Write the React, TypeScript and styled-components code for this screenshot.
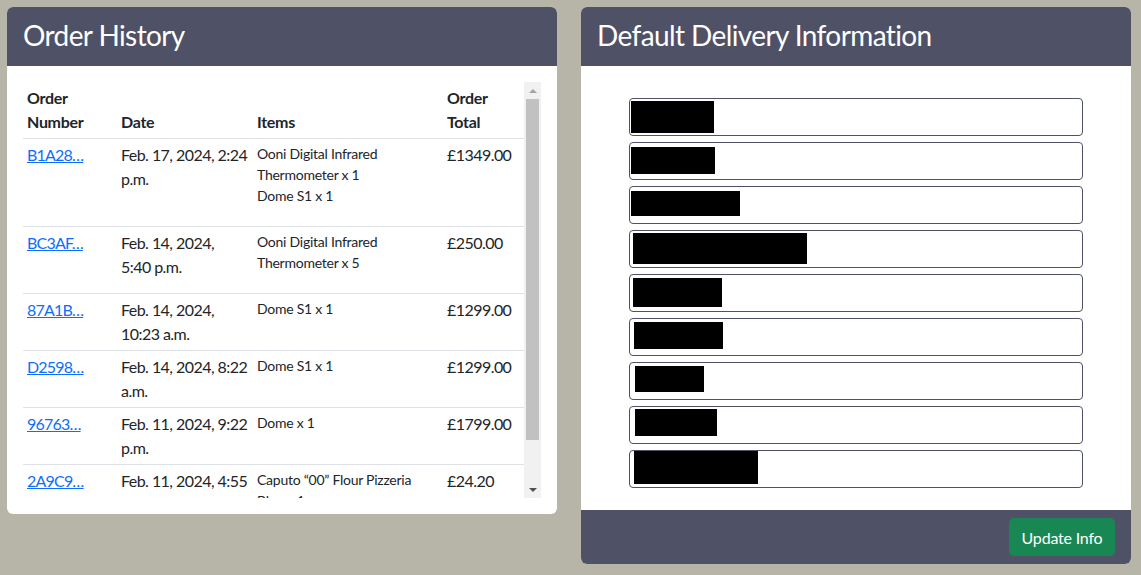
import React from "react";
import styled, { createGlobalStyle } from "styled-components";

const GlobalStyle = createGlobalStyle`
  html, body { margin: 0; padding: 0; }
  body {
    background: #b7b5a7;
    font-family: Lato, "Open Sans", sans-serif;
    color: #212529;
  }
  * { box-sizing: border-box; }
`;

const Page = styled.div`
  display: grid;
  grid-template-columns: 550px 550px;
  column-gap: 24px;
  align-items: start;
  padding: 7px;
  min-height: 575px;
`;

const Card = styled.section`
  background: #fff;
  border-radius: 6px;
  overflow: hidden;
  display: flex;
  flex-direction: column;
`;

const CardHeader = styled.header`
  background: #4f5166;
  height: 59px;
  padding: 0 16px;
  display: flex;
  align-items: center;
`;

const Title = styled.h2`
  margin: 0;
  color: #fff;
  font-size: 28px;
  font-weight: 400;
  line-height: 1.2;
  letter-spacing: -0.6px;
  padding-bottom: 2px;
`;

const CardBody = styled.div<{ $pad: string }>`
  padding: ${(p) => p.$pad};
`;

const ScrollArea = styled.div`
  display: flex;
  height: 416px;
`;

const Viewport = styled.div`
  flex: 1;
  min-width: 0;
  overflow: hidden;
`;

const ScrollTrack = styled.div`
  width: 17px;
  flex: none;
  background: #f1f1f1;
  display: flex;
  flex-direction: column;
`;

const ScrollArrow = styled.div<{ $dir: "up" | "down" }>`
  height: 17px;
  display: flex;
  align-items: center;
  justify-content: center;
  &::before {
    content: "";
    width: 0;
    height: 0;
    border-left: 4px solid transparent;
    border-right: 4px solid transparent;
    ${(p) =>
      p.$dir === "up"
        ? "border-bottom: 4px solid #a3a3a3;"
        : "border-top: 4px solid #505050;"}
  }
`;

const ScrollThumb = styled.div`
  height: 341px;
  margin: 0 2px;
  background: #c1c1c1;
`;

const ScrollSpacer = styled.div`
  flex: 1;
`;

const Table = styled.table`
  width: 100%;
  border-collapse: collapse;
  table-layout: fixed;
`;

const Th = styled.th<{ $w: number }>`
  width: ${(p) => p.$w}px;
  text-align: left;
  vertical-align: bottom;
  font-size: 16px;
  font-weight: 700;
  line-height: 24px;
  letter-spacing: -0.3px;
  padding: 4px;
  border-bottom: 1px solid #dee2e6;
`;

const Td = styled.td<{ $small?: boolean }>`
  vertical-align: top;
  font-size: ${(p) => (p.$small ? 14 : 16)}px;
  line-height: ${(p) => (p.$small ? 21 : 24)}px;
  letter-spacing: ${(p) => (p.$small ? -0.25 : -0.55)}px;
  padding: 4px;
  border-bottom: 1px solid #dee2e6;
`;

const OrderLink = styled.a`
  color: #0d6efd;
  text-decoration: underline;
  letter-spacing: -0.8px;
`;

const ItemList = styled.p`
  margin: 0 0 16px;
`;

const Form = styled.div`
  width: 454px;
  margin: 0 auto;
  display: flex;
  flex-direction: column;
  gap: 6px;
`;

const Field = styled.div`
  position: relative;
  height: 38px;
  border: 1px solid #4f5166;
  border-radius: 4px;
  background: #fff;
`;

const Redaction = styled.span<{ $x: number; $y: number; $w: number; $h: number }>`
  position: absolute;
  left: ${(p) => p.$x}px;
  top: ${(p) => p.$y}px;
  width: ${(p) => p.$w}px;
  height: ${(p) => p.$h}px;
  background: #000;
`;

const CardFooter = styled.footer`
  background: #4f5166;
  padding: 8px 16px 8px;
  display: flex;
  justify-content: flex-end;
`;

const Button = styled.button`
  background: #198754;
  color: #fff;
  border: none;
  border-radius: 5px;
  height: 38px;
  width: 106px;
  font-family: inherit;
  font-size: 16px;
  letter-spacing: -0.2px;
  cursor: pointer;
`;

const orders = [
  { id: "B1A28…", date: ["Feb. 17, 2024, 2:24", "p.m."], items: ["Ooni Digital Infrared", "Thermometer x 1", "Dome S1 x 1"], total: "£1349.00" },
  { id: "BC3AF…", date: ["Feb. 14, 2024,", "5:40 p.m."], items: ["Ooni Digital Infrared", "Thermometer x 5"], total: "£250.00" },
  { id: "87A1B…", date: ["Feb. 14, 2024,", "10:23 a.m."], items: ["Dome S1 x 1"], total: "£1299.00" },
  { id: "D2598…", date: ["Feb. 14, 2024, 8:22", "a.m."], items: ["Dome S1 x 1"], total: "£1299.00" },
  { id: "96763…", date: ["Feb. 11, 2024, 9:22", "p.m."], items: ["Dome x 1"], total: "£1799.00" },
  { id: "2A9C9…", date: ["Feb. 11, 2024, 4:55", "p.m."], items: ["Caputo “00” Flour Pizzeria", "Blue x 1"], total: "£24.20" },
];

const redactions = [
  { x: 1, y: 2, w: 83, h: 32 },
  { x: 1, y: 4, w: 84, h: 27 },
  { x: 1, y: 4, w: 109, h: 25 },
  { x: 3, y: 2, w: 174, h: 31 },
  { x: 3, y: 3, w: 89, h: 29 },
  { x: 4, y: 3, w: 89, h: 27 },
  { x: 5, y: 3, w: 69, h: 26 },
  { x: 5, y: 2, w: 82, h: 27 },
  { x: 4, y: 0, w: 124, h: 33 },
];

const Lines = ({ lines }: { lines: string[] }) => (
  <>
    {lines.map((l, i) => (
      <React.Fragment key={i}>
        {i > 0 && <br />}
        {l}
      </React.Fragment>
    ))}
  </>
);

export default function App() {
  return (
    <>
      <GlobalStyle />
      <Page>
        <Card>
          <CardHeader>
            <Title>Order History</Title>
          </CardHeader>
          <CardBody $pad="16px">
            <ScrollArea>
              <Viewport>
                <Table>
                  <thead>
                    <tr>
                      <Th $w={94}>Order Number</Th>
                      <Th $w={136}>Date</Th>
                      <Th $w={190}>Items</Th>
                      <Th $w={81}>Order Total</Th>
                    </tr>
                  </thead>
                  <tbody>
                    {orders.map((o) => (
                      <tr key={o.id}>
                        <Td>
                          <OrderLink href="#">{o.id}</OrderLink>
                        </Td>
                        <Td>
                          <Lines lines={o.date} />
                        </Td>
                        <Td $small>
                          <ItemList>
                            <Lines lines={o.items} />
                          </ItemList>
                        </Td>
                        <Td>{o.total}</Td>
                      </tr>
                    ))}
                  </tbody>
                </Table>
              </Viewport>
              <ScrollTrack aria-hidden>
                <ScrollArrow $dir="up" />
                <ScrollThumb />
                <ScrollSpacer />
                <ScrollArrow $dir="down" />
              </ScrollTrack>
            </ScrollArea>
          </CardBody>
        </Card>
        <Card>
          <CardHeader>
            <Title>Default Delivery Information</Title>
          </CardHeader>
          <CardBody $pad="32px 0 22px">
            <Form>
              {redactions.map((r, i) => (
                <Field key={i}>
                  <Redaction $x={r.x} $y={r.y} $w={r.w} $h={r.h} />
                </Field>
              ))}
            </Form>
          </CardBody>
          <CardFooter>
            <Button>Update Info</Button>
          </CardFooter>
        </Card>
      </Page>
    </>
  );
}
